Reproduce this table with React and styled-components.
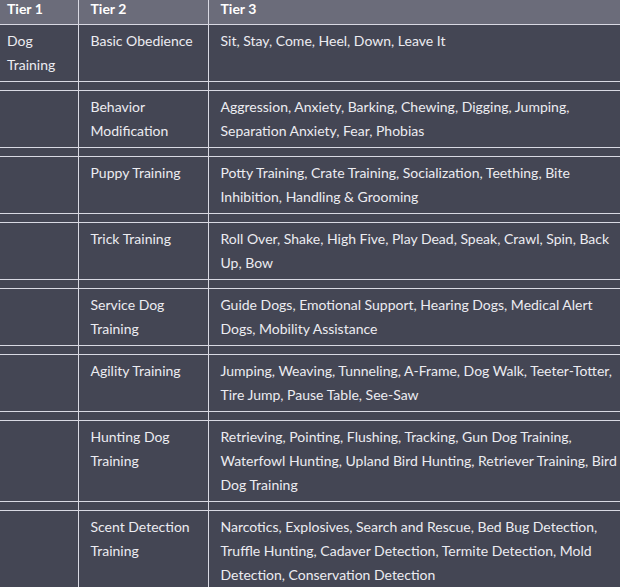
import React from 'react';
import styled, { createGlobalStyle } from 'styled-components';

const GlobalStyle = createGlobalStyle`
  html, body {
    margin: 0;
    background: #444654;
  }
  body {
    font-family: Lato, "Segoe UI", sans-serif;
    font-size: 14px;
    color: #ececf1;
  }
`;

const rows = [
  ['Dog Training', 'Basic Obedience', 'Sit, Stay, Come, Heel, Down, Leave It'],
  ['', 'Behavior Modification', 'Aggression, Anxiety, Barking, Chewing, Digging, Jumping, Separation Anxiety, Fear, Phobias'],
  ['', 'Puppy Training', 'Potty Training, Crate Training, Socialization, Teething, Bite Inhibition, Handling & Grooming'],
  ['', 'Trick Training', 'Roll Over, Shake, High Five, Play Dead, Speak, Crawl, Spin, Back Up, Bow'],
  ['', 'Service Dog Training', 'Guide Dogs, Emotional Support, Hearing Dogs, Medical Alert Dogs, Mobility Assistance'],
  ['', 'Agility Training', 'Jumping, Weaving, Tunneling, A-Frame, Dog Walk, Teeter-Totter, Tire Jump, Pause Table, See-Saw'],
  ['', 'Hunting Dog Training', 'Retrieving, Pointing, Flushing, Tracking, Gun Dog Training, Waterfowl Hunting, Upland Bird Hunting, Retriever Training, Bird Dog Training'],
  ['', 'Scent Detection Training', 'Narcotics, Explosives, Search and Rescue, Bed Bug Detection, Truffle Hunting, Cadaver Detection, Termite Detection, Mold Detection, Conservation Detection'],
];

const App = () => {
  return (
    <>
      <GlobalStyle />
      <Viewport>
        <Table>
          <colgroup>
            <col style={{ width: 78 }} />
            <col style={{ width: 130 }} />
            <col style={{ width: 428 }} />
          </colgroup>
          <thead>
            <tr>
              <HeadCell>Tier 1</HeadCell>
              <HeadCell>Tier 2</HeadCell>
              <HeadCell>Tier 3</HeadCell>
            </tr>
          </thead>
          <tbody>
            {rows.map(([t1, t2, t3], i) => (
              <React.Fragment key={t2}>
                {i > 0 && (
                  <tr>
                    <Cell />
                    <Cell />
                    <Cell />
                  </tr>
                )}
                <tr>
                  <Cell>{t1}</Cell>
                  <Cell>{t2}</Cell>
                  <Cell>{t3}</Cell>
                </tr>
              </React.Fragment>
            ))}
          </tbody>
        </Table>
      </Viewport>
    </>
  );
};

const Viewport = styled.div`
  width: 620px;
  height: 587px;
  overflow: hidden;
`;

const Table = styled.table`
  border-collapse: collapse;
  table-layout: fixed;
  width: 636px;
`;

const HeadCell = styled.th`
  background: #6b6c7a;
  color: #ffffff;
  font-weight: 700;
  text-align: left;
  line-height: 17px;
  padding: 0 12px 7px;
  border: 1px solid #d9d9e3;
  border-top: none;

  &:first-child {
    border-left: none;
    padding-left: 7px;
  }
`;

const Cell = styled.td`
  vertical-align: top;
  line-height: 24px;
  padding: 4px 12px;
  border: 1px solid #d9d9e3;

  &:first-child {
    border-left: none;
    padding-left: 7px;
  }
`;

export default App;
